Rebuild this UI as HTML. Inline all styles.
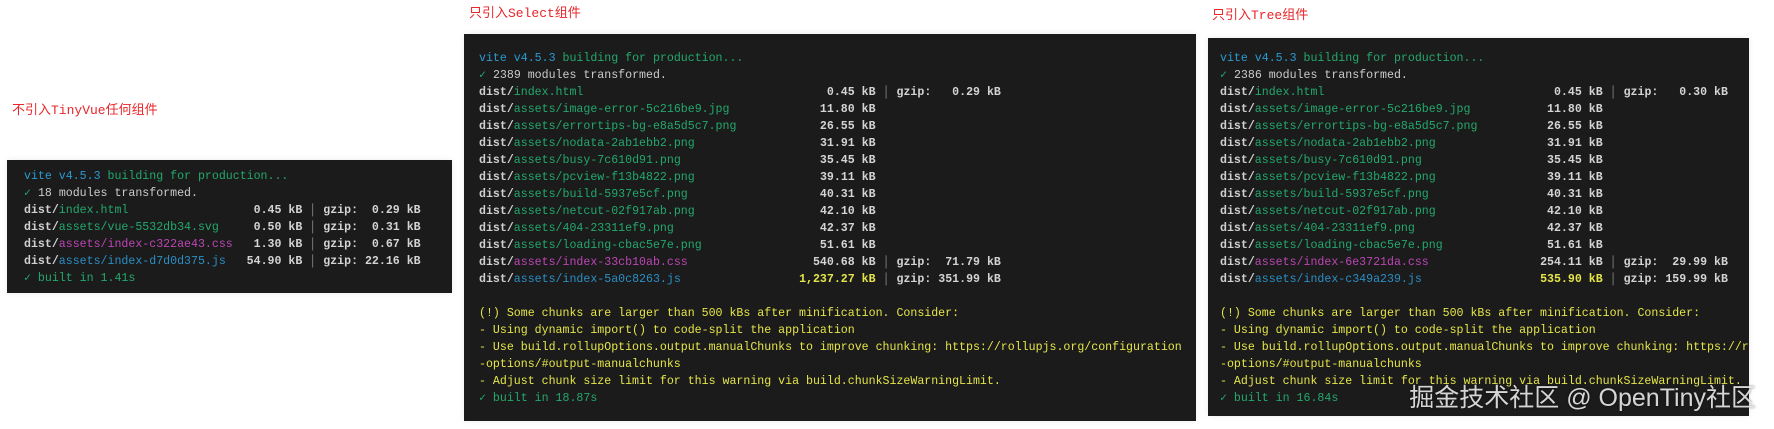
<!DOCTYPE html>
<html><head><meta charset="utf-8">
<style>
html,body{margin:0;padding:0;background:#fff;width:1774px;height:429px;overflow:hidden;position:relative}
.t{position:absolute;color:#e8262a;font-family:"Liberation Mono","Noto Sans CJK SC",monospace;font-size:13px;line-height:16px;white-space:nowrap}
.p{position:absolute;background:#1b1b1b;overflow:hidden;box-shadow:0 0 6px rgba(0,0,0,0.08)}
pre{margin:0;font-family:"Liberation Mono",monospace;font-size:11.6px;line-height:17px;color:#cccccc;white-space:pre}
.d{color:#d0d0d0;font-weight:bold}
.c{color:#2a9bd0}.g{color:#23a86d}.m{color:#bc45b5}.b{color:#2a8fc4}.y{color:#e5e54a}.w{color:#d4d4d4;font-weight:bold}.s{color:#888}
.wm{position:absolute;right:18px;top:378px;font-family:"Liberation Sans","Noto Sans CJK SC",sans-serif;font-size:25px;color:rgba(235,235,235,0.9);text-shadow:0 0 2px rgba(0,0,0,0.5);white-space:nowrap}
</style></head><body>
<div class="t" style="left:12px;top:103px">不引入TinyVue任何组件</div>
<div class="t" style="left:469px;top:6px">只引入Select组件</div>
<div class="t" style="left:1212px;top:8px">只引入Tree组件</div>

<div class="p" style="left:7px;top:160px;width:445px;height:133px">
<pre style="padding:8px 0 0 17px"><span class="c">vite v4.5.3</span> <span class="g">building for production...</span>
<span class="g">✓</span> 18 modules transformed.
<span class="d">dist/</span><span class="g">index.html</span>                <span class="w">  0.45 kB</span> <span class="s">│</span> <span class="w">gzip:  0.29 kB</span>
<span class="d">dist/</span><span class="g">assets/vue-5532db34.svg</span>   <span class="w">  0.50 kB</span> <span class="s">│</span> <span class="w">gzip:  0.31 kB</span>
<span class="d">dist/</span><span class="m">assets/index-c322ae43.css</span> <span class="w">  1.30 kB</span> <span class="s">│</span> <span class="w">gzip:  0.67 kB</span>
<span class="d">dist/</span><span class="b">assets/index-d7d0d375.js</span>  <span class="w"> 54.90 kB</span> <span class="s">│</span> <span class="w">gzip: 22.16 kB</span>
<span class="g">✓ built in 1.41s</span></pre>
</div>

<div class="p" style="left:464px;top:34px;width:732px;height:387px">
<pre style="padding:16px 0 0 15px"><span class="c">vite v4.5.3</span> <span class="g">building for production...</span>
<span class="g">✓</span> 2389 modules transformed.
<span class="d">dist/</span><span class="g">index.html</span>                               <span class="w">    0.45 kB</span> <span class="s">│</span> <span class="w">gzip:   0.29 kB</span>
<span class="d">dist/</span><span class="g">assets/image-error-5c216be9.jpg</span>          <span class="w">   11.80 kB</span>
<span class="d">dist/</span><span class="g">assets/errortips-bg-e8a5d5c7.png</span>         <span class="w">   26.55 kB</span>
<span class="d">dist/</span><span class="g">assets/nodata-2ab1ebb2.png</span>               <span class="w">   31.91 kB</span>
<span class="d">dist/</span><span class="g">assets/busy-7c610d91.png</span>                 <span class="w">   35.45 kB</span>
<span class="d">dist/</span><span class="g">assets/pcview-f13b4822.png</span>               <span class="w">   39.11 kB</span>
<span class="d">dist/</span><span class="g">assets/build-5937e5cf.png</span>                <span class="w">   40.31 kB</span>
<span class="d">dist/</span><span class="g">assets/netcut-02f917ab.png</span>               <span class="w">   42.10 kB</span>
<span class="d">dist/</span><span class="g">assets/404-23311ef9.png</span>                  <span class="w">   42.37 kB</span>
<span class="d">dist/</span><span class="g">assets/loading-cbac5e7e.png</span>              <span class="w">   51.61 kB</span>
<span class="d">dist/</span><span class="m">assets/index-33cb10ab.css</span>                <span class="w">  540.68 kB</span> <span class="s">│</span> <span class="w">gzip:  71.79 kB</span>
<span class="d">dist/</span><span class="b">assets/index-5a0c8263.js</span>                 <span class="y" style="font-weight:bold">1,237.27 kB</span> <span class="s">│</span> <span class="w">gzip: 351.99 kB</span>

<span class="y">(!) Some chunks are larger than 500 kBs after minification. Consider:
- Using dynamic import() to code-split the application
- Use build.rollupOptions.output.manualChunks to improve chunking: https://rollupjs.org/configuration
-options/#output-manualchunks
- Adjust chunk size limit for this warning via build.chunkSizeWarningLimit.</span>
<span class="g">✓ built in 18.87s</span></pre>
</div>

<div class="p" style="left:1208px;top:38px;width:541px;height:378px">
<pre style="padding:12px 0 0 12px"><span class="c">vite v4.5.3</span> <span class="g">building for production...</span>
<span class="g">✓</span> 2386 modules transformed.
<span class="d">dist/</span><span class="g">index.html</span>                               <span class="w">  0.45 kB</span> <span class="s">│</span> <span class="w">gzip:   0.30 kB</span>
<span class="d">dist/</span><span class="g">assets/image-error-5c216be9.jpg</span>          <span class="w"> 11.80 kB</span>
<span class="d">dist/</span><span class="g">assets/errortips-bg-e8a5d5c7.png</span>         <span class="w"> 26.55 kB</span>
<span class="d">dist/</span><span class="g">assets/nodata-2ab1ebb2.png</span>               <span class="w"> 31.91 kB</span>
<span class="d">dist/</span><span class="g">assets/busy-7c610d91.png</span>                 <span class="w"> 35.45 kB</span>
<span class="d">dist/</span><span class="g">assets/pcview-f13b4822.png</span>               <span class="w"> 39.11 kB</span>
<span class="d">dist/</span><span class="g">assets/build-5937e5cf.png</span>                <span class="w"> 40.31 kB</span>
<span class="d">dist/</span><span class="g">assets/netcut-02f917ab.png</span>               <span class="w"> 42.10 kB</span>
<span class="d">dist/</span><span class="g">assets/404-23311ef9.png</span>                  <span class="w"> 42.37 kB</span>
<span class="d">dist/</span><span class="g">assets/loading-cbac5e7e.png</span>              <span class="w"> 51.61 kB</span>
<span class="d">dist/</span><span class="m">assets/index-6e3721da.css</span>                <span class="w">254.11 kB</span> <span class="s">│</span> <span class="w">gzip:  29.99 kB</span>
<span class="d">dist/</span><span class="b">assets/index-c349a239.js</span>                 <span class="y" style="font-weight:bold">535.90 kB</span> <span class="s">│</span> <span class="w">gzip: 159.99 kB</span>

<span class="y">(!) Some chunks are larger than 500 kBs after minification. Consider:
- Using dynamic import() to code-split the application
- Use build.rollupOptions.output.manualChunks to improve chunking: https://rollupjs.org/configuration
-options/#output-manualchunks
- Adjust chunk size limit for this warning via build.chunkSizeWarningLimit.</span>
<span class="g">✓ built in 16.84s</span></pre>
</div>

<div class="wm">掘金技术社区 @ OpenTiny社区</div>
</body></html>
